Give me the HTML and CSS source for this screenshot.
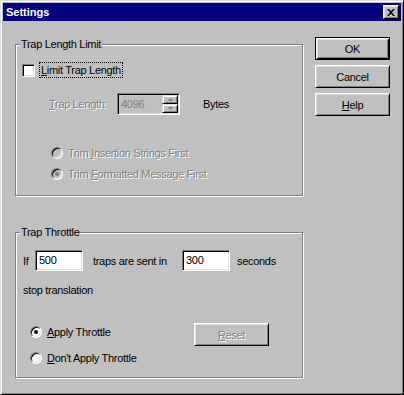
FILE: index.html
```html
<!DOCTYPE html>
<html>
<head>
<meta charset="utf-8">
<link rel="stylesheet" href="styles.css">
</head>
<body>
<div class="window">
  <div class="titlebar">
    <span class="title">Settings</span>
    <span class="close"><svg width="8" height="7" viewBox="0 0 8 7"><path d="M0 0h2l2 2.3L6 0h2L5 3.5 8 7H6L4 4.7 2 7H0l3-3.5z" fill="#000"/></svg></span>
  </div>
  <div class="main">
    <div class="left">
      <div class="group g1">
        <span class="group-title">Trap Length Limit</span>
        <div class="check-row">
          <span class="checkbox"></span>
          <span class="focus"><u>L</u>imit Trap Length</span>
        </div>
        <div class="length-row">
          <span class="lbl dis"><u>T</u>rap Length:</span>
          <span class="spin">
            <span class="spin-val">4096</span>
            <span class="spin-btns">
              <span class="sbtn"><svg width="5" height="3" viewBox="0 0 5 3"><path d="M2.5 0L5 3H0z" fill="#808080"/></svg></span>
              <span class="sbtn"><svg width="5" height="3" viewBox="0 0 5 3"><path d="M0 0h5L2.5 3z" fill="#808080"/></svg></span>
            </span>
          </span>
          <span class="bytes">Bytes</span>
        </div>
        <div class="radio-row first dis">
          <span class="radio off"></span>
          <span class="rlabel">Trim <u>I</u>nsertion Strings First</span>
        </div>
        <div class="radio-row second dis">
          <span class="radio off checked"></span>
          <span class="rlabel">Trim <u>F</u>ormatted Message First</span>
        </div>
      </div>
      <div class="group g2">
        <span class="group-title">Trap Throttle</span>
        <div class="throttle-row">
          <span class="if">If</span>
          <span class="edit">500</span>
          <span class="traps">traps are sent in</span>
          <span class="edit">300</span>
          <span class="secs">seconds</span>
        </div>
        <div class="stop">stop translation</div>
        <div class="bottom-row">
          <div class="radios">
            <div class="radio-row2">
              <span class="radio checked"></span>
              <span class="rlabel"><u>A</u>pply Throttle</span>
            </div>
            <div class="radio-row2">
              <span class="radio"></span>
              <span class="rlabel"><u>D</u>on't Apply Throttle</span>
            </div>
          </div>
          <span class="btn"><span class="dis"><u>R</u>eset</span></span>
        </div>
      </div>
    </div>
    <div class="buttons">
      <span class="btn default">OK</span>
      <span class="btn">Cancel</span>
      <span class="btn"><span><u>H</u>elp</span></span>
    </div>
  </div>
</div>
</body>
</html>
```

FILE: styles.css
```css
body {
  margin: 0;
  font-family: "Liberation Sans", Arial, sans-serif;
  font-size: 11px;
  letter-spacing: -0.3px;
  color: #000;
  background: #c0c0c0;
}

.window {
  box-sizing: border-box;
  width: 404px;
  height: 395px;
  background: #c0c0c0;
  border: 1px solid;
  border-color: #dfdfdf #000 #000 #dfdfdf;
  box-shadow: inset 1px 1px #fff, inset -1px -1px #808080;
  padding: 2px;
  display: flex;
  flex-direction: column;
}

.titlebar {
  height: 18px;
  background: #000080;
  display: flex;
  align-items: center;
  justify-content: space-between;
  padding: 0 2px 0 3px;
}

.title {
  color: #fff;
  font-weight: bold;
  font-size: 11px;
  letter-spacing: 0;
}

.close {
  box-sizing: border-box;
  width: 16px;
  height: 14px;
  background: #c0c0c0;
  border: 1px solid;
  border-color: #fff #000 #000 #fff;
  box-shadow: inset 1px 1px #dfdfdf, inset -1px -1px #808080;
  display: flex;
  align-items: center;
  justify-content: center;
}

.close svg { display: block; }

.main {
  display: flex;
  align-items: flex-start;
  gap: 12px;
  padding: 16px 0 0 12px;
}

.left {
  margin-top: 7px;
  display: flex;
  flex-direction: column;
  gap: 36px;
}

.group {
  position: relative;
  box-sizing: border-box;
  width: 288px;
  border: 1px solid #808080;
  box-shadow: inset 1px 1px #fff, 1px 1px #fff;
  display: flex;
  flex-direction: column;
}

.g1 { height: 152px; }
.g2 { height: 146px; }

.group-title {
  position: absolute;
  top: -8px;
  left: 4px;
  padding: 0 1px;
  background: #c0c0c0;
  line-height: 14px;
}

.dis {
  color: #808080;
  text-shadow: 1px 1px 0 #fff;
}

/* checkbox row */
.check-row {
  margin-top: 17px;
  height: 16px;
  padding-left: 6px;
  display: flex;
  align-items: center;
}

.checkbox {
  box-sizing: border-box;
  width: 13px;
  height: 13px;
  background: #fff;
  border: 1px solid;
  border-color: #808080 #fff #fff #808080;
  box-shadow: inset 1px 1px #000, inset -1px -1px #dfdfdf;
}

.focus {
  margin-left: 4px;
  padding: 0 1px;
  border: 1px dotted #000;
  line-height: 14px;
}

/* length row */
.length-row {
  margin-top: 15px;
  height: 22px;
  padding-left: 33px;
  display: flex;
  align-items: center;
}

.lbl { width: 68px; }

.spin {
  box-sizing: border-box;
  width: 63px;
  height: 22px;
  display: flex;
  padding: 1px;
  background: #c0c0c0;
  border: 1px solid;
  border-color: #808080 #fff #fff #808080;
  box-shadow: inset 1px 1px #000, inset -1px -1px #dfdfdf;
}

.spin-val {
  flex: 1;
  color: #808080;
  padding: 2px 0 0 2px;
  line-height: 14px;
}

.spin-btns {
  width: 16px;
  display: flex;
  flex-direction: column;
}

.sbtn {
  box-sizing: border-box;
  flex: 1;
  border: 1px solid;
  border-color: #dfdfdf #000 #000 #dfdfdf;
  box-shadow: inset 1px 1px #fff, inset -1px -1px #808080;
  display: flex;
  align-items: center;
  justify-content: center;
}

.sbtn svg { display: block; }

.bytes { margin-left: 23px; }

/* radios */
.radio-row {
  height: 16px;
  padding-left: 35px;
  display: flex;
  align-items: center;
}

.radio-row.first { margin-top: 30px; }
.radio-row.second { margin-top: 5px; }

.radio {
  box-sizing: border-box;
  width: 12px;
  height: 12px;
  border-radius: 50%;
  background: #fff;
  border: 1px solid;
  border-color: #808080 #fff #fff #808080;
  box-shadow: inset 1px 1px #000, inset -1px -1px #dfdfdf;
  display: flex;
  align-items: center;
  justify-content: center;
}

.radio.checked::after {
  content: "";
  width: 4px;
  height: 4px;
  border-radius: 50%;
  background: #000;
}

.radio.off { background: #c0c0c0; }
.radio.off.checked::after { background: #808080; }

.rlabel { margin-left: 5px; }

/* throttle */
.throttle-row {
  margin-top: 17px;
  height: 21px;
  padding-left: 7px;
  display: flex;
  align-items: center;
}

.if { width: 12px; }

.edit {
  box-sizing: border-box;
  width: 48px;
  height: 21px;
  padding: 2px 3px 0;
  line-height: 14px;
  background: #fff;
  border: 1px solid;
  border-color: #808080 #fff #fff #808080;
  box-shadow: inset 1px 1px #000, inset -1px -1px #dfdfdf;
}

.traps { margin-left: 10px; width: 89px; }
.secs { margin-left: 7px; }

.stop {
  margin-top: 11px;
  line-height: 16px;
  padding-left: 7px;
}

.bottom-row {
  margin-top: 25px;
  padding-left: 14px;
  display: flex;
  align-items: flex-start;
}

.radios {
  width: 164px;
  padding-top: 1px;
  display: flex;
  flex-direction: column;
  gap: 10px;
}

.radio-row2 {
  height: 16px;
  display: flex;
  align-items: center;
}

/* buttons */
.buttons {
  display: flex;
  flex-direction: column;
  gap: 5px;
}

.btn {
  box-sizing: border-box;
  width: 75px;
  height: 23px;
  border: 1px solid;
  border-color: #fff #000 #000 #fff;
  box-shadow: inset 1px 1px #dfdfdf, inset -1px -1px #808080;
  display: flex;
  align-items: center;
  justify-content: center;
}

.btn.default {
  border: 1px solid #000;
  box-shadow: inset 1px 1px #fff, inset -1px -1px #000, inset 2px 2px #dfdfdf, inset -2px -2px #808080;
}
```
